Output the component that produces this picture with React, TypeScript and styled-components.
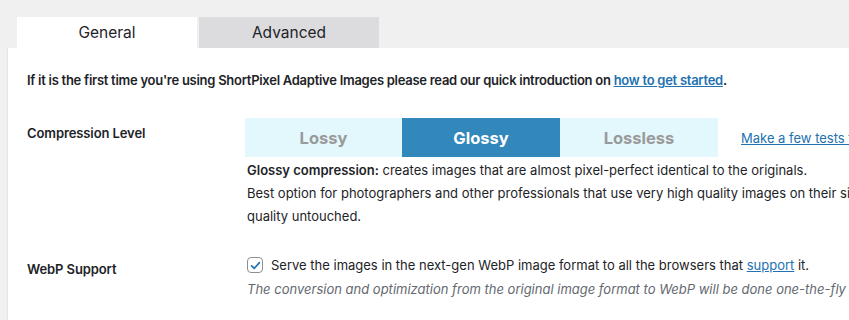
import React from "react";
import styled, { createGlobalStyle } from "styled-components";

const GlobalStyle = createGlobalStyle`
  html, body {
    margin: 0;
    padding: 0;
    background: #f0f0f1;
    overflow: hidden;
  }
  body {
    font-family: Inter, "Noto Sans", "DejaVu Sans", sans-serif;
    color: #1d2327;
  }
`;

const Page = styled.div`
  width: 849px;
  height: 320px;
  padding: 17px 0 0 7px;
  box-sizing: border-box;
  overflow: hidden;
`;

const TabBar = styled.div`
  display: flex;
  gap: 2px;
  margin-left: 10px;
`;

const Tab = styled.div<{ $active?: boolean }>`
  width: 180px;
  height: 31px;
  display: flex;
  align-items: center;
  justify-content: center;
  font-size: 15.5px;
  background: ${(p) => (p.$active ? "#ffffff" : "#dcdcde")};
  color: #1d2327;
`;

const Panel = styled.div`
  background: #ffffff;
  border-left: 1px solid #e2e4e7;
  padding: 24px 0 0 19px;
  width: 1200px;
  height: 400px;
`;

const Intro = styled.p`
  margin: 0;
  font-size: 13px;
  font-weight: 600;
  line-height: 16px;
  letter-spacing: -0.27px;
  white-space: nowrap;
`;

const Link = styled.a`
  color: #2271b1;
  text-decoration: underline;
`;

const Row = styled.div<{ $top: number }>`
  display: grid;
  grid-template-columns: 218px 1fr;
  margin-top: ${(p) => p.$top}px;
`;

const Label = styled.div<{ $offset: number }>`
  margin-top: ${(p) => p.$offset}px;
  font-size: 13px;
  font-weight: 600;
  line-height: 20px;
  letter-spacing: -0.1px;
`;

const Field = styled.div`
  display: flex;
  flex-direction: column;
`;

const SegmentRow = styled.div`
  display: flex;
  align-items: center;
`;

const Segment = styled.div<{ $selected?: boolean; $w: number }>`
  width: ${(p) => p.$w}px;
  height: 39px;
  display: flex;
  align-items: center;
  justify-content: center;
  font-size: 16.5px;
  font-weight: 700;
  background: ${(p) => (p.$selected ? "#3287bb" : "#e2f8fc")};
  color: ${(p) => (p.$selected ? "#ffffff" : "#9a9a9a")};
`;

const SideLink = styled(Link)`
  margin-left: 23px;
  font-size: 13px;
  white-space: nowrap;
`;

const Description = styled.p`
  margin: 2px 0 0 2px;
  font-size: 13px;
  line-height: 23px;
  white-space: nowrap;
`;

const CheckLine = styled.label`
  display: flex;
  align-items: center;
  gap: 8px;
  margin-left: 2px;
  font-size: 13px;
  line-height: 24px;
  white-space: nowrap;
`;

const Box = styled.span`
  width: 14px;
  height: 14px;
  border: 1px solid #8c8f94;
  border-radius: 4px;
  display: flex;
  align-items: center;
  justify-content: center;
  background: #fff;
`;

const Note = styled.p`
  margin: 0 0 0 2px;
  font-size: 13px;
  line-height: 24px;
  font-style: italic;
  color: #646970;
  white-space: nowrap;
`;

export default function App() {
  return (
    <>
      <GlobalStyle />
      <Page>
        <TabBar>
          <Tab $active>General</Tab>
          <Tab>Advanced</Tab>
        </TabBar>
        <Panel>
          <Intro>
            If it is the first time you're using ShortPixel Adaptive Images please read our quick introduction on{" "}
            <Link href="#">how to get started</Link>.
          </Intro>

          <Row $top={30}>
            <Label $offset={5}>Compression Level</Label>
            <Field>
              <SegmentRow>
                <Segment $w={157}>Lossy</Segment>
                <Segment $w={158} $selected>Glossy</Segment>
                <Segment $w={158}>Lossless</Segment>
                <SideLink href="#">Make a few tests to help you decide</SideLink>
              </SegmentRow>
              <Description>
                <strong style={{ fontWeight: 600 }}>Glossy compression:</strong> creates images that are almost pixel-perfect identical to the originals.
                <br />
                Best option for photographers and other professionals that use very high quality images on their site and want the best
                <br />
                quality untouched.
              </Description>
            </Field>
          </Row>

          <Row $top={25}>
            <Label $offset={6}>WebP Support</Label>
            <Field>
              <CheckLine>
                <Box>
                  <svg width="13" height="13" viewBox="0 0 20 20">
                    <path d="M4 10.5l4 4 8-9" fill="none" stroke="#2271b1" strokeWidth="2.6" strokeLinecap="round" strokeLinejoin="round" />
                  </svg>
                </Box>
                <span>
                  Serve the images in the next-gen WebP image format to all the browsers that <Link href="#">support</Link> it.
                </span>
              </CheckLine>
              <Note>
                The conversion and optimization from the original image format to WebP will be done one-the-fly by ShortPixel.
              </Note>
            </Field>
          </Row>
        </Panel>
      </Page>
    </>
  );
}
